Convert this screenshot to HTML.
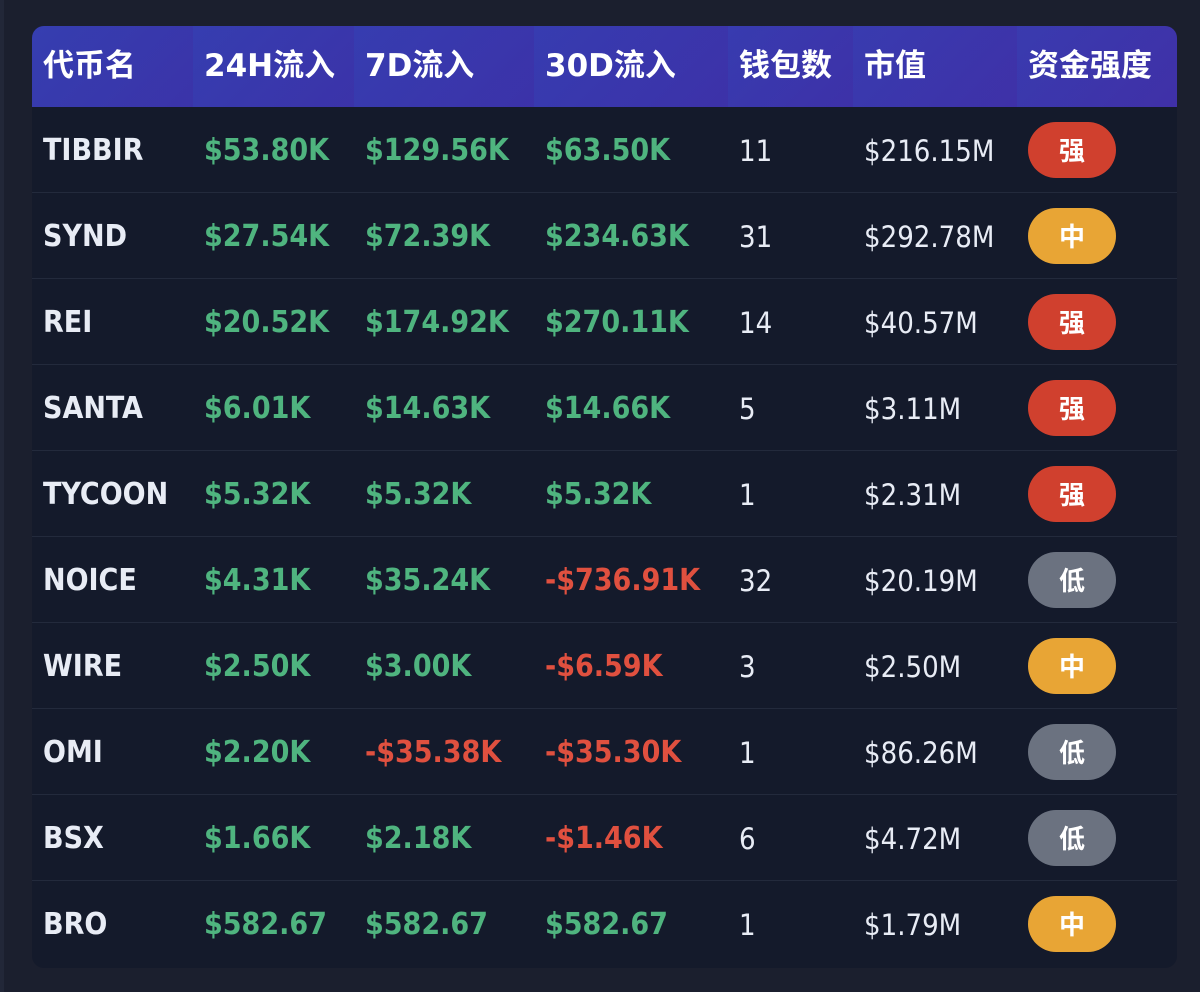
<!DOCTYPE html>
<html><head><meta charset="utf-8"><style>
*{margin:0;padding:0;box-sizing:border-box}
body{width:1200px;height:992px;background:#1b1f2e;overflow:hidden;font-family:"DejaVu Sans Condensed","DejaVu Sans","Noto Sans CJK SC",sans-serif;position:relative}
.edge{position:absolute;left:0;top:0;width:4px;height:992px;background:#222738}
.tbl{position:absolute;left:32px;top:26px;width:1145px;height:942px;border-radius:12px;overflow:hidden;background:#141a2b}
.hdr{position:absolute;left:0;top:0;width:1145px;height:81px;background:linear-gradient(90deg,#3338a8,#3535a8 50%,#3a33a6)}
.hc{position:absolute;top:0;height:81px;line-height:81px;color:#fff;font-weight:bold;font-size:31px;font-family:"DejaVu Sans","Noto Sans CJK SC",sans-serif;padding-left:11px;background:linear-gradient(135deg,rgba(60,80,200,.25),rgba(80,40,170,.25));white-space:nowrap}
.row{position:absolute;left:0;width:1145px;height:86px;border-bottom:1px solid #232a3c}
.c{position:absolute;top:0;height:86px;line-height:88px;font-size:30px;white-space:nowrap}
.n{color:#e8ecf5;font-weight:bold}
.g{color:#4fb47f;font-weight:bold}
.r{color:#e0503f;font-weight:bold}
.w{color:#e8ecf5;font-size:29px}
.b{position:absolute;left:996px;top:15px;width:88px;height:56px;border-radius:28px;color:#fff;text-align:center;line-height:56px;font-size:26px;font-weight:bold;font-family:"Noto Sans CJK SC",sans-serif}
.s{background:#d0402e}.m{background:#e8a535}.l{background:#6b7280}
</style></head><body>
<div class="edge"></div>
<div class="tbl">
<div class="hdr">
<div class="hc" style="left:0;width:161px">代币名</div>
<div class="hc" style="left:161px;width:161px">24H流入</div>
<div class="hc" style="left:322px;width:180px">7D流入</div>
<div class="hc" style="left:502px;width:194px">30D流入</div>
<div class="hc" style="left:696px;width:125px">钱包数</div>
<div class="hc" style="left:821px;width:164px">市值</div>
<div class="hc" style="left:985px;width:160px">资金强度</div>
</div>
</div>
<div style="position:absolute;left:32px;top:107px">
<div class="row" style="top:0"><div class="c n" style="left:11px">TIBBIR</div><div class="c g" style="left:172px">$53.80K</div><div class="c g" style="left:333px">$129.56K</div><div class="c g" style="left:513px">$63.50K</div><div class="c w" style="left:707px">11</div><div class="c w" style="left:832px">$216.15M</div><div class="b s">强</div></div>
<div class="row" style="top:86px"><div class="c n" style="left:11px">SYND</div><div class="c g" style="left:172px">$27.54K</div><div class="c g" style="left:333px">$72.39K</div><div class="c g" style="left:513px">$234.63K</div><div class="c w" style="left:707px">31</div><div class="c w" style="left:832px">$292.78M</div><div class="b m">中</div></div>
<div class="row" style="top:172px"><div class="c n" style="left:11px">REI</div><div class="c g" style="left:172px">$20.52K</div><div class="c g" style="left:333px">$174.92K</div><div class="c g" style="left:513px">$270.11K</div><div class="c w" style="left:707px">14</div><div class="c w" style="left:832px">$40.57M</div><div class="b s">强</div></div>
<div class="row" style="top:258px"><div class="c n" style="left:11px">SANTA</div><div class="c g" style="left:172px">$6.01K</div><div class="c g" style="left:333px">$14.63K</div><div class="c g" style="left:513px">$14.66K</div><div class="c w" style="left:707px">5</div><div class="c w" style="left:832px">$3.11M</div><div class="b s">强</div></div>
<div class="row" style="top:344px"><div class="c n" style="left:11px">TYCOON</div><div class="c g" style="left:172px">$5.32K</div><div class="c g" style="left:333px">$5.32K</div><div class="c g" style="left:513px">$5.32K</div><div class="c w" style="left:707px">1</div><div class="c w" style="left:832px">$2.31M</div><div class="b s">强</div></div>
<div class="row" style="top:430px"><div class="c n" style="left:11px">NOICE</div><div class="c g" style="left:172px">$4.31K</div><div class="c g" style="left:333px">$35.24K</div><div class="c r" style="left:513px">-$736.91K</div><div class="c w" style="left:707px">32</div><div class="c w" style="left:832px">$20.19M</div><div class="b l">低</div></div>
<div class="row" style="top:516px"><div class="c n" style="left:11px">WIRE</div><div class="c g" style="left:172px">$2.50K</div><div class="c g" style="left:333px">$3.00K</div><div class="c r" style="left:513px">-$6.59K</div><div class="c w" style="left:707px">3</div><div class="c w" style="left:832px">$2.50M</div><div class="b m">中</div></div>
<div class="row" style="top:602px"><div class="c n" style="left:11px">OMI</div><div class="c g" style="left:172px">$2.20K</div><div class="c r" style="left:333px">-$35.38K</div><div class="c r" style="left:513px">-$35.30K</div><div class="c w" style="left:707px">1</div><div class="c w" style="left:832px">$86.26M</div><div class="b l">低</div></div>
<div class="row" style="top:688px"><div class="c n" style="left:11px">BSX</div><div class="c g" style="left:172px">$1.66K</div><div class="c g" style="left:333px">$2.18K</div><div class="c r" style="left:513px">-$1.46K</div><div class="c w" style="left:707px">6</div><div class="c w" style="left:832px">$4.72M</div><div class="b l">低</div></div>
<div class="row" style="top:774px;border-bottom:none"><div class="c n" style="left:11px">BRO</div><div class="c g" style="left:172px">$582.67</div><div class="c g" style="left:333px">$582.67</div><div class="c g" style="left:513px">$582.67</div><div class="c w" style="left:707px">1</div><div class="c w" style="left:832px">$1.79M</div><div class="b m">中</div></div>
</div>
</body></html>
